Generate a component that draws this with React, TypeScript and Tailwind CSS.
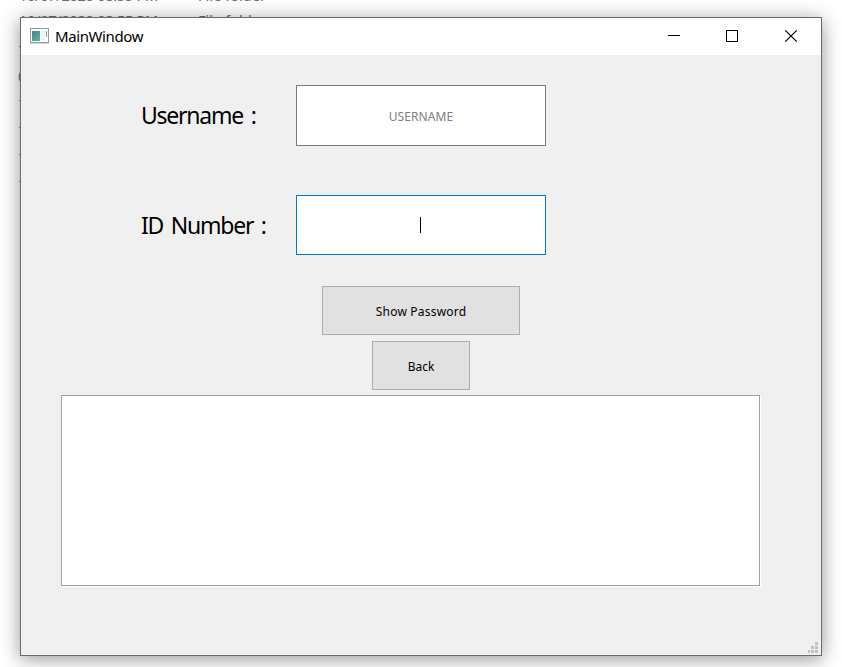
import type { ReactNode } from "react";

function TitleBar() {
  return (
    <header className="flex h-[37px] items-start bg-white">
      <svg className="ml-[9px] mt-[10px] h-4 w-[19px] shrink-0" viewBox="0 0 19 16" shapeRendering="crispEdges">
        <defs>
          <linearGradient id="pane" x1="0" y1="0" x2="0.7" y2="1">
            <stop offset="0" stopColor="#4a78ad" />
            <stop offset="1" stopColor="#5cb585" />
          </linearGradient>
        </defs>
        <rect x="0" y="0" width="19" height="16" fill="#d4d7dc" />
        <rect x="0.5" y="0.5" width="18" height="14" fill="#fff" stroke="#9299a5" />
        <rect x="2" y="3" width="8" height="10" fill="url(#pane)" />
        <rect x="11" y="3" width="4" height="10" fill="#f1f1f1" />
        <rect x="16" y="3" width="1" height="6" fill="#5cb585" />
      </svg>
      <h1 className="ml-[6px] mt-[8px] text-[15px] leading-5 tracking-[-0.4px]">MainWindow</h1>
      <svg className="ml-auto mr-[23px] mt-[12px] h-3 w-[130px]" viewBox="0 0 130 12" fill="none" stroke="#000">
        <path d="M0 5.5H12M58.500 0.500H69.500V11.500H58.500Z" shapeRendering="crispEdges" />
        <path d="M117.300 0.300L128.700 11.700M128.700 0.300L117.300 11.700" strokeWidth="1.100" />
      </svg>
    </header>
  );
}

function Label({ children }: { children: ReactNode }) {
  return (
    <span className="w-[155px] whitespace-pre text-[23px] leading-8 tracking-[-1.25px] [word-spacing:3px]">
      {children}
    </span>
  );
}

function SizeGrip() {
  return (
    <svg className="absolute bottom-[2px] right-[3px] h-[11px] w-[10px]" viewBox="0 0 10 11" fill="#bfbfbf" shapeRendering="crispEdges">
      <path d="M7 0h3v3H7zM3 4h3v3H3zM7 4h3v3H7zM0 8h2v3H0zM3 8h3v3H3zM7 8h3v3H7z" />
    </svg>
  );
}

export default function App() {
  return (
    <div className="relative h-[667px] w-[842px] overflow-hidden bg-white pl-5 pt-[17px] font-['Noto_Sans','Liberation_Sans',sans-serif] text-black">
      <div className="absolute left-[19px] top-[-18px] grid w-[400px] grid-cols-[179px_1fr] whitespace-nowrap text-[14.500px] leading-[27px] tracking-[-0.25px] text-[#6d6d6d]">
        <span>10/07/2020 08:55 PM</span>
        <span className="tracking-[0.05px]">File folder</span>
        <span className="-mt-[2px]">10/07/2020 08:55 PM</span>
        <span className="-mt-[2px] tracking-[0.05px]">File folder</span>
      </div>
      <div className="absolute left-[18px] top-[46px] flex flex-col text-[#6d6d6d]">
        <i className="ml-px h-px w-1 bg-[#9a7460]" />
        <span className="h-[53px] pt-[20px] text-[14px] leading-5">0</span>
        <i className="mb-[26px] ml-px h-px w-1 bg-[#9a7460]" />
        <i className="mb-[26px] ml-px h-px w-1 bg-[#9a7460]" />
        <i className="mb-[26px] ml-px h-px w-1 bg-[#9a7460]" />
        <i className="ml-px h-px w-1 bg-[#9a7460]" />
      </div>
      <main className="relative h-[639px] w-[802px] border border-[#6b6b6b] bg-[#f0f0f0] shadow-[0_3px_18px_rgba(0,0,0,0.42)]">
        <TitleBar />
        <section className="flex flex-col pt-[30px]">
          <div className="flex h-[61px] items-center pl-[120px]">
            <div className="flex pb-px">
              <Label>Username :</Label>
            </div>
            <input
              className="h-full w-[250px] border border-[#7a7a7a] bg-white pt-[2px] text-center text-[12px] tracking-[0.1px] outline-none placeholder:text-[#808080]"
              placeholder="USERNAME"
            />
          </div>
          <div className="mt-[49px] flex h-[60px] items-center pl-[120px]">
            <Label>ID Number :</Label>
            <div className="flex h-full w-[250px] items-center border border-[#0078d7] bg-white pl-[123px]">
              <span className="h-4 w-px bg-black" />
            </div>
          </div>
          <button className="ml-[301px] mt-[31px] h-[49px] w-[198px] border border-[#adadad] bg-[#e1e1e1] pt-[3px] text-[12px] tracking-[0.2px]">
            Show Password
          </button>
          <button className="ml-[351px] mt-[6px] h-[49px] w-[98px] border border-[#adadad] bg-[#e1e1e1] pt-[3px] text-[12px]">
            Back
          </button>
          <div className="ml-10 mt-[5px] h-[191px] w-[699px] border border-[#a0a0a0] bg-white shadow-[1px_1px_0_#fff]" />
        </section>
        <SizeGrip />
      </main>
    </div>
  );
}
